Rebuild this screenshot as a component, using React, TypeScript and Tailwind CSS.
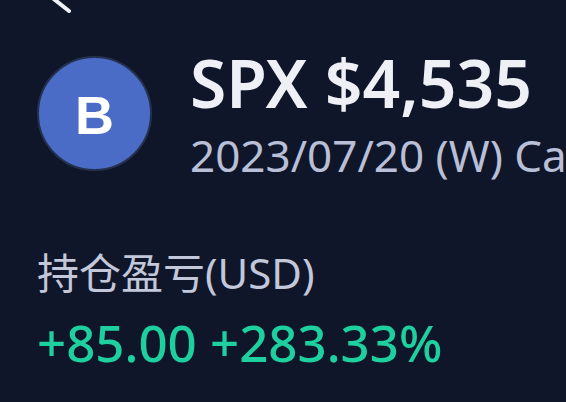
import React from 'react';

const sans = { fontFamily: '"Noto Sans", "Noto Sans CJK SC", sans-serif' };

const BackChevron: React.FC = () => (
  <svg width="40" height="20" viewBox="40 0 40 20" className="ml-[40px] block">
    <path
      d="M69 -19 L50 -4 L69 11"
      fill="none"
      stroke="#eef0f6"
      strokeWidth="4"
      strokeLinecap="round"
      strokeLinejoin="round"
    />
  </svg>
);

const App: React.FC = () => {
  return (
    <div
      className="w-[566px] h-[402px] overflow-hidden bg-[#0f1629] font-['Noto_Sans','Noto_Sans_CJK_SC',sans-serif]"
      style={sans}
    >
      <div className="h-[46px]">
        <BackChevron />
      </div>

      {/* header: avatar + title */}
      <div className="flex items-center pl-[37px]">
        <div className="w-[115px] h-[115px] shrink-0 rounded-full bg-[#4a6cc6] border-2 border-[#26314f] flex items-center justify-center">
          <span className="text-white font-bold text-[54px] leading-none font-['Liberation_Sans',sans-serif] mt-[2px]">
            B
          </span>
        </div>
        <div className="ml-[38px] flex flex-col gap-[11px] whitespace-nowrap">
          <div className="text-[66px] leading-[72px] font-semibold text-[#eef0f6]">SPX $4,535</div>
          <div className="text-[44px] leading-[52px] text-[#b8bfd6]">2023/07/20 (W) Call</div>
        </div>
      </div>

      {/* position P&L */}
      <div className="mt-[67px] pl-[37px] flex flex-col gap-[15px]">
        <div className="text-[42px] leading-[50px] text-[#c2c7da]">持仓盈亏(USD)</div>
        <div className="text-[51px] leading-[58px] font-medium text-[#1ed09f]">+85.00 +283.33%</div>
      </div>
    </div>
  );
};

export default App;
